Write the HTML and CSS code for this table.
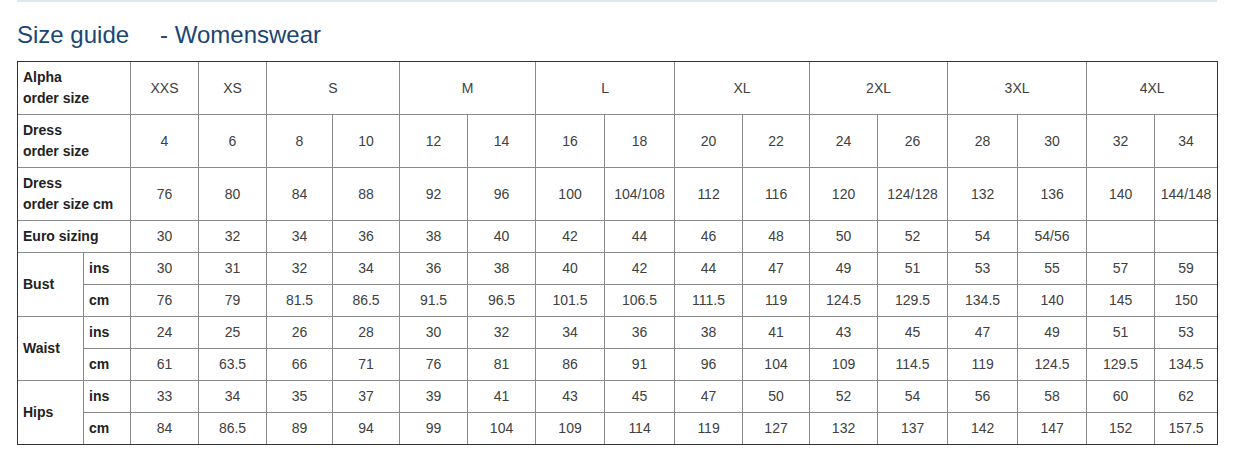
FILE: index.html
```html
<!DOCTYPE html>
<html lang="en">
<head>
<meta charset="utf-8">
<title>Size guide - Womenswear</title>
<link rel="stylesheet" href="styles.css">
</head>
<body>
<div class="page">
  <div class="rule"></div>
  <h1 class="title">Size guide<span class="sub">- Womenswear</span></h1>
  <table class="sizes">
    <colgroup>
      <col class="c-lab1"><col class="c-lab2">
      <col class="c1"><col class="c2"><col class="c3"><col class="c4">
      <col class="c5"><col class="c6"><col class="c7"><col class="c8">
      <col class="c9"><col class="c10"><col class="c11"><col class="c12">
      <col class="c13"><col class="c14"><col class="c15"><col class="c16">
    </colgroup>
    <tbody>
      <tr class="tall">
        <th colspan="2">Alpha<br>order size</th>
        <td>XXS</td><td>XS</td><td colspan="2">S</td><td colspan="2">M</td><td colspan="2">L</td>
        <td colspan="2">XL</td><td colspan="2">2XL</td><td colspan="2">3XL</td><td colspan="2">4XL</td>
      </tr>
      <tr class="tall">
        <th colspan="2">Dress<br>order size</th>
        <td>4</td><td>6</td><td>8</td><td>10</td><td>12</td><td>14</td><td>16</td><td>18</td>
        <td>20</td><td>22</td><td>24</td><td>26</td><td>28</td><td>30</td><td>32</td><td>34</td>
      </tr>
      <tr class="tall">
        <th colspan="2">Dress<br>order size cm</th>
        <td>76</td><td>80</td><td>84</td><td>88</td><td>92</td><td>96</td><td>100</td><td>104/108</td>
        <td>112</td><td>116</td><td>120</td><td>124/128</td><td>132</td><td>136</td><td>140</td><td>144/148</td>
      </tr>
      <tr>
        <th colspan="2">Euro sizing</th>
        <td>30</td><td>32</td><td>34</td><td>36</td><td>38</td><td>40</td><td>42</td><td>44</td>
        <td>46</td><td>48</td><td>50</td><td>52</td><td>54</td><td>54/56</td><td></td><td></td>
      </tr>
      <tr>
        <th rowspan="2">Bust</th><th>ins</th>
        <td>30</td><td>31</td><td>32</td><td>34</td><td>36</td><td>38</td><td>40</td><td>42</td>
        <td>44</td><td>47</td><td>49</td><td>51</td><td>53</td><td>55</td><td>57</td><td>59</td>
      </tr>
      <tr>
        <th>cm</th>
        <td>76</td><td>79</td><td>81.5</td><td>86.5</td><td>91.5</td><td>96.5</td><td>101.5</td><td>106.5</td>
        <td>111.5</td><td>119</td><td>124.5</td><td>129.5</td><td>134.5</td><td>140</td><td>145</td><td>150</td>
      </tr>
      <tr>
        <th rowspan="2">Waist</th><th>ins</th>
        <td>24</td><td>25</td><td>26</td><td>28</td><td>30</td><td>32</td><td>34</td><td>36</td>
        <td>38</td><td>41</td><td>43</td><td>45</td><td>47</td><td>49</td><td>51</td><td>53</td>
      </tr>
      <tr>
        <th>cm</th>
        <td>61</td><td>63.5</td><td>66</td><td>71</td><td>76</td><td>81</td><td>86</td><td>91</td>
        <td>96</td><td>104</td><td>109</td><td>114.5</td><td>119</td><td>124.5</td><td>129.5</td><td>134.5</td>
      </tr>
      <tr>
        <th rowspan="2">Hips</th><th>ins</th>
        <td>33</td><td>34</td><td>35</td><td>37</td><td>39</td><td>41</td><td>43</td><td>45</td>
        <td>47</td><td>50</td><td>52</td><td>54</td><td>56</td><td>58</td><td>60</td><td>62</td>
      </tr>
      <tr>
        <th>cm</th>
        <td>84</td><td>86.5</td><td>89</td><td>94</td><td>99</td><td>104</td><td>109</td><td>114</td>
        <td>119</td><td>127</td><td>132</td><td>137</td><td>142</td><td>147</td><td>152</td><td>157.5</td>
      </tr>
    </tbody>
  </table>
</div>
</body>
</html>
```

FILE: styles.css
```css
* { box-sizing: border-box; }
html, body { margin: 0; padding: 0; background: #ffffff; }
body {
  font-family: "Liberation Sans", Arial, sans-serif;
  color: #333333;
}
.page {
  width: 1238px;
  padding: 0 21px 0 17px;
}
.rule {
  width: 1200px;
  height: 2px;
  background: #dde9ee;
}
.title {
  margin: 19px 0 12px 0;
  font-size: 24px;
  line-height: 28px;
  font-weight: normal;
  color: #1c4672;
}
.title .sub {
  margin-left: 31px;
}
.sizes {
  width: 1200px;
  table-layout: fixed;
  border-collapse: collapse;
  outline: 1px solid #333333;
  outline-offset: -1px;
  font-size: 14px;
  line-height: 21px;
}
.c-lab1 { width: 66px; }
.c-lab2 { width: 47px; }
.c1 { width: 68px; }
.c2 { width: 68px; }
.c3 { width: 66px; }
.c4 { width: 67px; }
.c5 { width: 68px; }
.c6 { width: 68px; }
.c7 { width: 69px; }
.c8 { width: 70px; }
.c9 { width: 68px; }
.c10 { width: 67px; }
.c11 { width: 68px; }
.c12 { width: 70px; }
.c13 { width: 70px; }
.c14 { width: 69px; }
.c15 { width: 68px; }
.c16 { width: 63px; }
.sizes th,
.sizes td {
  border: 1px solid #8a8a8a;
  padding: 5px 5px;
  height: 32px;
  vertical-align: middle;
  white-space: nowrap;
}
.sizes tr.tall th,
.sizes tr.tall td {
  height: 53px;
}
.sizes th {
  text-align: left;
  font-weight: bold;
  color: #222222;
}
.sizes td {
  text-align: center;
  color: #404040;
  padding-left: 2px;
  padding-right: 2px;
}
```
